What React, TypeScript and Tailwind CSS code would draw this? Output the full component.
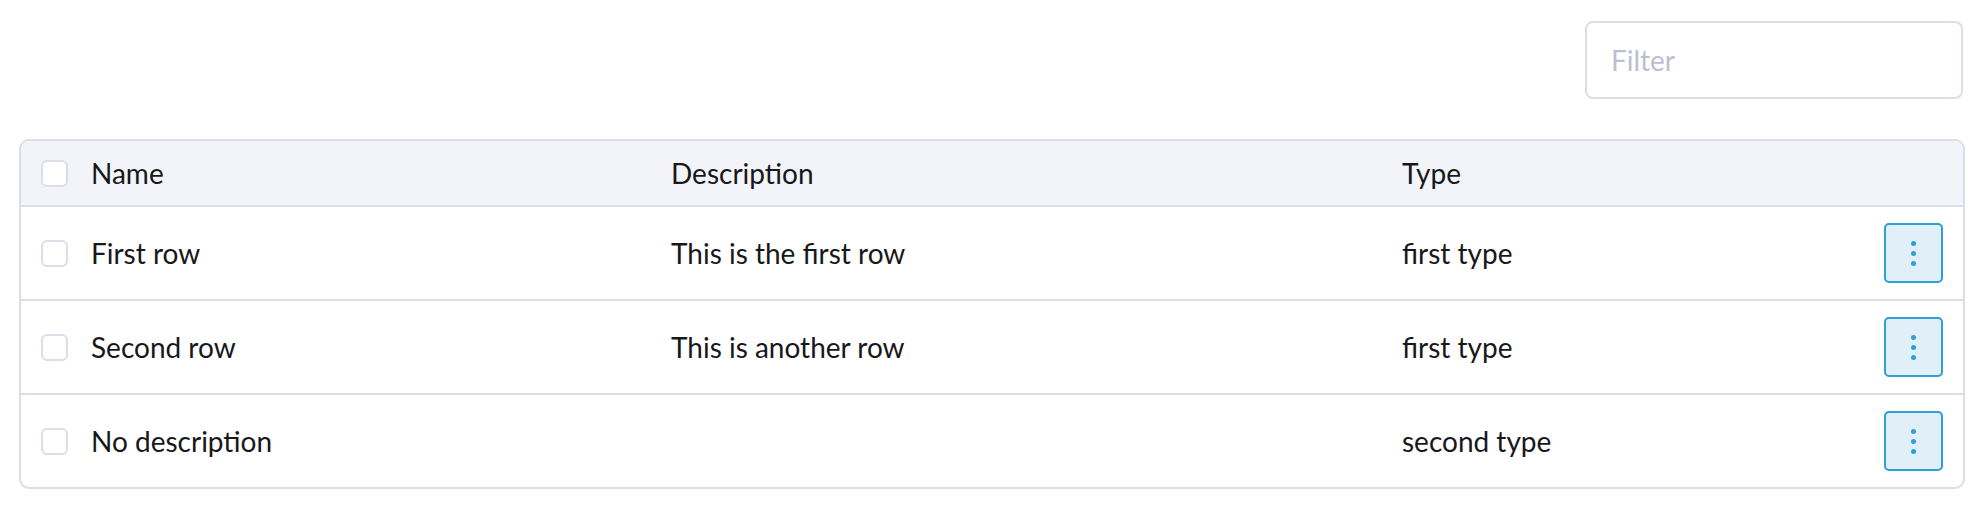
import { useState } from 'react';

type Row = { name: string; description: string; type: string };

const rows: Row[] = [
  { name: 'First row', description: 'This is the first row', type: 'first type' },
  { name: 'Second row', description: 'This is another row', type: 'first type' },
  { name: 'No description', description: '', type: 'second type' },
];

function Checkbox() {
  return <div className="w-[27px] h-[27px] rounded-[6px] border-2 border-[#dcdde8] bg-white shrink-0" />;
}

function MoreButton() {
  return (
    <button className="w-[59px] h-[60px] rounded-[5px] border-2 border-[#2e9fd7] bg-[#e0eff8] flex flex-col items-center justify-center gap-[5px]">
      <span className="w-[5px] h-[5px] rounded-full bg-[#2e9fd7]" />
      <span className="w-[5px] h-[5px] rounded-full bg-[#2e9fd7]" />
      <span className="w-[5px] h-[5px] rounded-full bg-[#2e9fd7]" />
    </button>
  );
}

export default function App() {
  const [filter, setFilter] = useState('');

  return (
    <div className="w-full min-h-screen bg-white px-[19px] pt-[21px] text-[28px] text-[#17181b] font-['Lato','Liberation_Sans',sans-serif]">
      {/* Filter */}
      <div className="flex justify-end pr-[2px]">
        <input
          value={filter}
          onChange={(e) => setFilter(e.target.value)}
          placeholder="Filter"
          className="w-[378px] h-[78px] rounded-[8px] border-2 border-[#dcdde8] pl-[24px] text-[28px] outline-none placeholder:text-[#bcbfd1]"
        />
      </div>

      {/* Table */}
      <div className="mt-[40px] border-2 border-[#dcdde8] rounded-[10px] overflow-hidden">
        <div className="flex items-center h-[66px] bg-[#f3f4f9] border-b-2 border-[#dcdde8] pl-[20px]">
          <div className="w-[50px]"><Checkbox /></div>
          <div className="w-[580px]">Name</div>
          <div className="w-[731px]">Description</div>
          <div className="flex-1">Type</div>
        </div>
        {rows.map((r, i) => (
          <div
            key={r.name}
            className={`flex items-center pl-[20px] pr-[20px] ${i < rows.length - 1 ? 'h-[94px] border-b-2 border-[#dcdde8]' : 'h-[92px]'}`}
          >
            <div className="w-[50px]"><Checkbox /></div>
            <div className="w-[580px]">{r.name}</div>
            <div className="w-[731px]">{r.description}</div>
            <div className="flex-1">{r.type}</div>
            <MoreButton />
          </div>
        ))}
      </div>
    </div>
  );
}
